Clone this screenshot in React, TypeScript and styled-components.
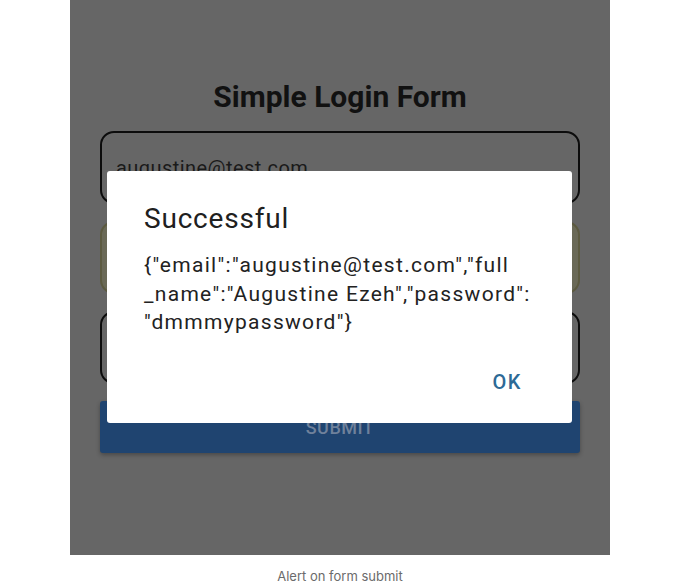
import React from "react";
import styled, { createGlobalStyle } from "styled-components";

const GlobalStyle = createGlobalStyle`
  html, body {
    margin: 0;
    padding: 0;
    background: #fff;
  }
  body {
    font-family: Roboto, "Noto Sans", sans-serif;
  }
`;

const Page = styled.div`
  width: 680px;
  display: flex;
  flex-direction: column;
  align-items: center;
`;

const Screen = styled.div`
  position: relative;
  width: 540px;
  height: 555px;
  background: #666666;
  box-sizing: border-box;
  padding: 78px 30px 0;
  display: flex;
  flex-direction: column;
`;

const Title = styled.h1`
  margin: 0 0 16px;
  font-family: Roboto, sans-serif;
  font-size: 30px;
  font-weight: 700;
  line-height: 37px;
  text-align: center;
  color: #111;
`;

const Field = styled.div<{ $focused?: boolean }>`
  height: 73px;
  box-sizing: border-box;
  border: 2px solid ${(p) => (p.$focused ? "#5c5a40" : "#0c0c0c")};
  background: ${(p) => (p.$focused ? "#6a6957" : "transparent")};
  border-radius: 14px;
  margin-bottom: 17px;
  padding: 23px 14px 0;
  font-size: 20px;
  letter-spacing: 0.45px;
  color: #1a1a1a;
`;

const SubmitButton = styled.div`
  height: 52px;
  border-radius: 3px;
  background: #1f4470;
  box-shadow: 0 2px 4px rgba(0, 0, 0, 0.3);
  display: flex;
  align-items: center;
  justify-content: center;
  font-size: 18px;
  font-weight: 500;
  letter-spacing: 0.5px;
  color: #6f819b;
`;

const Dialog = styled.div`
  position: absolute;
  left: 37px;
  top: 171px;
  width: 465px;
  height: 252px;
  background: #fff;
  border-radius: 3px;
  box-sizing: border-box;
  padding: 30px 50px 0 37px;
  display: flex;
  flex-direction: column;
`;

const DialogTitle = styled.div`
  font-size: 28px;
  line-height: 36px;
  letter-spacing: 0.8px;
  color: #202020;
  margin-bottom: 14px;
`;

const DialogBody = styled.div`
  font-size: 21px;
  line-height: 28.7px;
  letter-spacing: 1.3px;
  color: #222;
`;

const Line = styled.div`
  white-space: nowrap;
`;

const Actions = styled.div`
  display: flex;
  justify-content: flex-end;
  margin-top: 33px;
`;

const OkButton = styled.div`
  font-size: 20px;
  font-weight: 500;
  letter-spacing: 1.6px;
  color: #2d6a96;
`;

const Caption = styled.div`
  margin-top: 12px;
  font-family: Inter, "Noto Sans", sans-serif;
  font-size: 13px;
  line-height: 18px;
  color: #6b6b6b;
`;

const bodyLines = [
  '{"email":"augustine@test.com","full',
  '_name":"Augustine Ezeh","password":',
  '"dmmmypassword"}',
];

export default function App() {
  return (
    <Page>
      <GlobalStyle />
      <Screen>
        <Title>Simple Login Form</Title>
        <Field>augustine@test.com</Field>
        <Field $focused />
        <Field />
        <SubmitButton>SUBMIT</SubmitButton>
        <Dialog>
          <DialogTitle>Successful</DialogTitle>
          <DialogBody>
            {bodyLines.map((l) => (
              <Line key={l}>{l}</Line>
            ))}
          </DialogBody>
          <Actions>
            <OkButton>OK</OkButton>
          </Actions>
        </Dialog>
      </Screen>
      <Caption>Alert on form submit</Caption>
    </Page>
  );
}
